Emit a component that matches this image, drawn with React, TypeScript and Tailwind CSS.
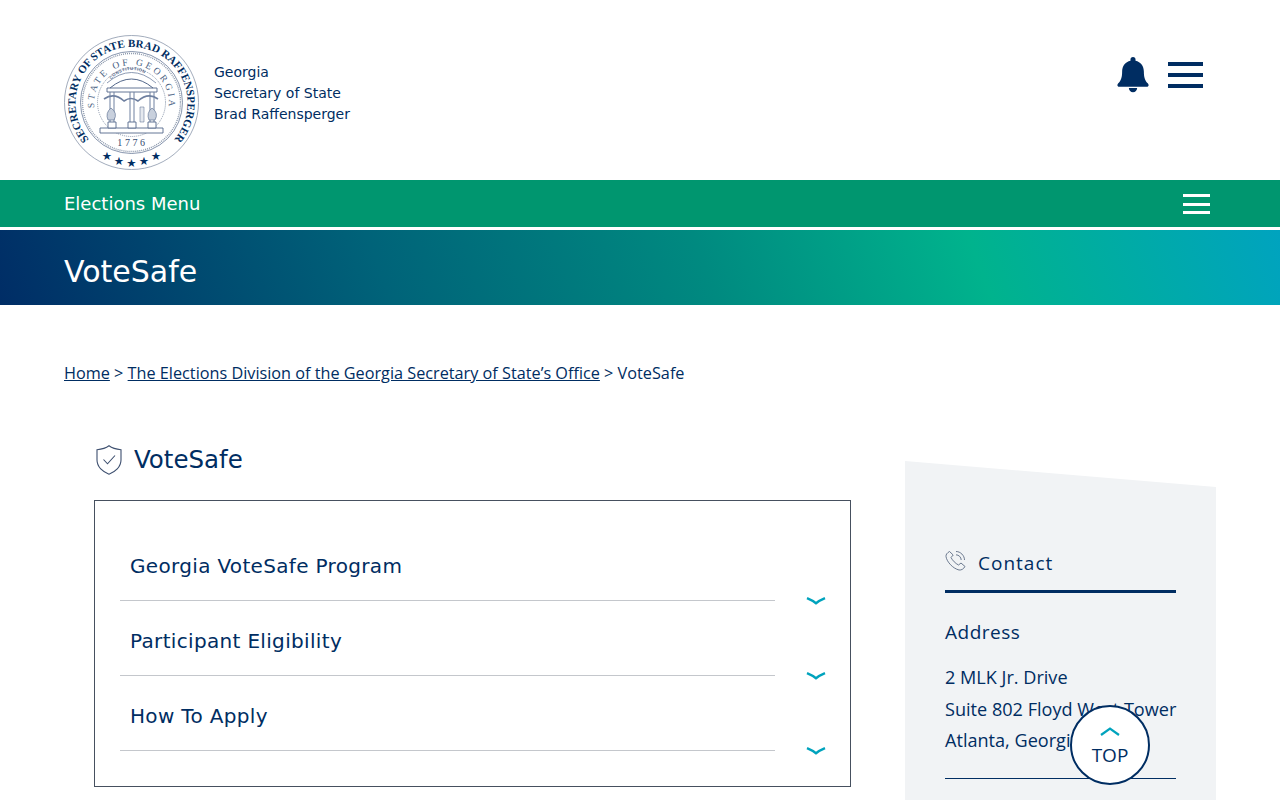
import React from "react";

const navy = "#002d62";

function Seal() {
  const stars = [
    [107, 156], [119, 161], [131.5, 163], [144, 161], [156, 156],
  ];
  return (
    <svg width="136" height="136" viewBox="64 35 136 136" className="shrink-0">
      <defs>
        <path id="outerArc" d="M 89 139.500 A 56 56 0 1 1 174 139.500" fill="none" />
        <path id="innerArc" d="M 94.500 108 A 37.400 37.400 0 1 1 168.500 108" fill="none" />
        <path id="constArc" d="M 109 83 A 26 26 0 0 1 154 83" fill="none" />
      </defs>
      <circle cx="131.5" cy="102.5" r="67" fill="#fff" stroke="#8a97ab" strokeWidth="0.8" />
      <text fill={navy} fontFamily="'Liberation Serif', serif" fontWeight="700" fontSize="11">
        <textPath href="#outerArc">SECRETARY OF STATE BRAD RAFFENSPERGER</textPath>
      </text>
      <circle cx="131.5" cy="102.5" r="51" fill="none" stroke="#53678a" strokeWidth="0.7" />
      <circle cx="131.5" cy="102.5" r="49" fill="none" stroke="#8a97ab" strokeWidth="1.4" strokeDasharray="1 1" />
      <text fill="#4a5f83" fontFamily="'Liberation Serif', serif" fontSize="9.5" letterSpacing="2.6">
        <textPath href="#innerArc">STATE OF GEORGIA</textPath>
      </text>
      <circle cx="131.5" cy="102.5" r="34" fill="none" stroke="#8a97ab" strokeWidth="1" strokeDasharray="1 1" />
      <text x="132.5" y="146" textAnchor="middle" fill="#33486f" fontFamily="'Liberation Serif', serif" fontSize="10" letterSpacing="2.6">1776</text>
      <text fill="#53678a" fontFamily="'Liberation Sans', sans-serif" fontSize="4.3" fontWeight="700" letterSpacing="0.4">
        <textPath href="#constArc" startOffset="4">CONSTITUTION</textPath>
      </text>
      <path d="M107 83 Q131.5 62 156 83" fill="none" stroke="#6f80a0" strokeWidth="0.8" />
      <path d="M107 88 H157 V92 H107 Z M100 128 H163 V133 H100 Z" fill="#fff" stroke="#53678a" strokeWidth="0.9" />
      <path d="M110 88 Q131.5 70 153 88" fill="none" stroke="#53678a" strokeWidth="1" />
      <path d="M110 92 V122 M114 92 V122 M130 92 V122 M134 92 V122 M150 92 V122 M154 92 V122" stroke="#6f80a0" strokeWidth="1" />
      <path d="M108 122 H116 V128 H108 Z M128 122 H136 V128 H128 Z M148 122 H156 V128 H148 Z" fill="#fff" stroke="#53678a" strokeWidth="0.9" />
      <path d="M104 99 Q114 92 124 101 Q131 96 138 101 Q148 92 158 99" fill="none" stroke="#6f80a0" strokeWidth="1.6" />
      <path d="M111 108 q-6 5 -3 12 h6 q4 -7 -3 -12 Z" fill="#c8d0dd" stroke="#53678a" strokeWidth="0.6" />
      <path d="M152 108 q-6 5 -3 12 h6 q4 -7 -3 -12 Z" fill="#c8d0dd" stroke="#53678a" strokeWidth="0.6" />
      <path d="M140 107 h4 v15 h-4 Z" fill="#e5e9ef" stroke="#53678a" strokeWidth="0.5" />
      {stars.map(([x, y]) => (
        <text key={x} x={x} y={y + 4} textAnchor="middle" fontSize="11.5" fill={navy} fontFamily="'DejaVu Sans', sans-serif">★</text>
      ))}
    </svg>
  );
}

function Chevron() {
  return (
    <svg width="20" height="8" viewBox="0 0 20 8" className="shrink-0">
      <path d="M1 1.2 Q7 3.8 10 6.2 Q13 3.8 19 1.2" fill="none" stroke="#00a3bd" strokeWidth="2.4" />
    </svg>
  );
}

function AccordionRow({ label }: { label: string }) {
  return (
    <div className="flex items-end h-[75px]">
      <div className="w-[655px] h-full border-b border-[#c4c7cc] flex items-end pl-[10px] pb-[21px]">
        <span className="text-[20px] leading-[26px] tracking-[0.33px] text-[#002d62]">{label}</span>
      </div>
      <div className="ml-[31px] -mb-[4px] h-[8px] flex items-center">
        <Chevron />
      </div>
    </div>
  );
}

function Bars({ color, w, h, gap }: { color: string; w: string; h: string; gap: string }) {
  return (
    <div className={`flex flex-col ${w} ${gap}`}>
      <div className={`${h} ${color}`} />
      <div className={`${h} ${color}`} />
      <div className={`${h} ${color}`} />
    </div>
  );
}

export default function App() {
  return (
    <div className="relative h-[800px] w-full overflow-hidden bg-white font-['DejaVu_Sans',sans-serif] text-[#002d62]">
      <header className="h-[180px] pl-[64px] pr-[77px] flex items-start justify-between">
        <div className="flex items-center pt-[35px]">
          <Seal />
          <div className="ml-[14px] mb-[20px] text-[14px] leading-[21px]">
            <div>Georgia</div>
            <div>Secretary of State</div>
            <div>Brad Raffensperger</div>
          </div>
        </div>
        <div className="flex items-center pt-[56px] gap-[19px]">
          <svg width="32" height="37" viewBox="0 0 33 37">
            <path
              d="M16.5 0.5a2.6 2.6 0 0 1 2.6 2.6v1.1c5.4 1.2 8.6 5.6 8.6 11.2 0 7 1.6 9.8 4 12.2.6.6.9 1.2.9 2 0 .9-.8 1.6-1.7 1.6H2.1c-.9 0-1.7-.7-1.7-1.6 0-.8.3-1.4.9-2 2.4-2.4 4-5.2 4-12.2 0-5.6 3.2-10 8.6-11.2V3.1a2.6 2.6 0 0 1 2.6-2.6Z"
              fill="#002d62"
            />
            <path d="M12.2 32.4h8.6a4.3 4.3 0 0 1-8.6 0Z" fill="#002d62" />
          </svg>
          <Bars color="bg-[#002d62]" w="w-[35px]" h="h-[4px]" gap="gap-[7px]" />
        </div>
      </header>

      <div className="h-[47px] bg-[#00966f] pl-[64px] pr-[70px] pt-[1px] flex items-center justify-between text-white">
        <span className="-mt-[1px] text-[18px]">Elections Menu</span>
        <Bars color="bg-white" w="w-[27px]" h="h-[3px]" gap="gap-[5.5px]" />
      </div>

      <div className="mt-[3px] h-[75px] pl-[64px] pt-[8px] flex items-center bg-[linear-gradient(70deg,#002d66_0%,#006379_30%,#008a80_55%,#00b38d_76%,#00a3bf_100%)]">
        <h1 className="text-[30px] leading-none font-normal text-white">VoteSafe</h1>
      </div>

      <nav className="pl-[64px] mt-[57px] font-['Open_Sans',sans-serif] text-[16.24px] leading-[22px]">
        <a className="underline">Home</a> &gt;{" "}
        <a className="underline">The Elections Division of the Georgia Secretary of State’s Office</a> &gt; VoteSafe
      </nav>

      <div className="flex items-start pl-[94px] mt-[53px]">
        <main className="w-[757px] shrink-0">
          <div className="flex items-center h-[44px] pl-[2px] gap-[12px]">
            <svg width="26" height="30" viewBox="0 0 26 30" fill="none" stroke="#3d4f6f" strokeWidth="1.1" className="mt-[2px]">
              <path d="M13 0.8 C16 3 20.5 4.3 25 4.8 V15 C25 22 19 27 13 29.2 C7 27 1 22 1 15 V4.8 C5.5 4.3 10 3 13 0.8 Z" />
              <path d="M7.5 14.5 L11.5 18.8 L19 10.5" />
            </svg>
            <h2 className="mt-[2px] text-[24.5px] leading-none font-normal">VoteSafe</h2>
          </div>
          <div className="mt-[19px] w-[757px] h-[287px] border border-[#46505f] pl-[25px] pt-[25px]">
            <AccordionRow label="Georgia VoteSafe Program" />
            <AccordionRow label="Participant Eligibility" />
            <AccordionRow label="How To Apply" />
          </div>
        </main>

        <aside className="ml-[54px] mt-[24px] w-[311px] h-[360px] bg-[#f1f3f5] [clip-path:polygon(0_0,100%_26px,100%_100%,0_100%)] pl-[40px] pr-[40px] pt-[88px]">
          <div className="flex items-center h-[28px] gap-[12px]">
            <svg width="21" height="21" viewBox="0 0 21 21" fill="none" stroke="#4a5a75" strokeWidth="0.8" className="-mt-[5px]">
              <path d="M4.5 1.5 C2 3 0.8 4.5 1 6.5 C1.8 12 8 18.5 14 20 C16.5 20.3 18.5 19 20 16.5 L16 13 L13.5 15 C10.5 13.5 7.5 10.5 6 7.5 L8.2 5 Z" />
              <path d="M11 1.5 C15.5 1.5 19.5 5.5 19.5 10 M11 4.8 C13.8 4.8 16.2 7.2 16.2 10" />
            </svg>
            <span className="font-['Open_Sans',sans-serif] text-[19px] tracking-[1px]">Contact</span>
          </div>
          <div className="mt-[13px] border-t-[3px] border-[#002d62]" />
          <h3 className="mt-[27px] font-['Open_Sans',sans-serif] text-[19px] leading-[24px] tracking-[0.5px] font-normal">Address</h3>
          <div className="mt-[18px] font-['Open_Sans',sans-serif] text-[18.1px] leading-[31.5px] whitespace-nowrap">
            <div>2 MLK Jr. Drive</div>
            <div>Suite 802 Floyd West Tower</div>
            <div>Atlanta, Georgia 30334</div>
          </div>
          <div className="mt-[21px] border-t border-[#002d62]" />
        </aside>
      </div>

      <button className="absolute left-[1070px] top-[705px] w-[80px] h-[80px] rounded-full bg-white border-2 border-[#002d62] flex flex-col items-center font-['Open_Sans',sans-serif] font-medium text-[19px] leading-[24px] text-[#002d62]">
        <svg width="20" height="9" viewBox="0 0 20 9" className="mt-[20px]">
          <path d="M1 8 L10 1.5 L19 8" fill="none" stroke="#00a3bd" strokeWidth="2.2" />
        </svg>
        <span className="mt-[7px]">TOP</span>
      </button>
    </div>
  );
}
